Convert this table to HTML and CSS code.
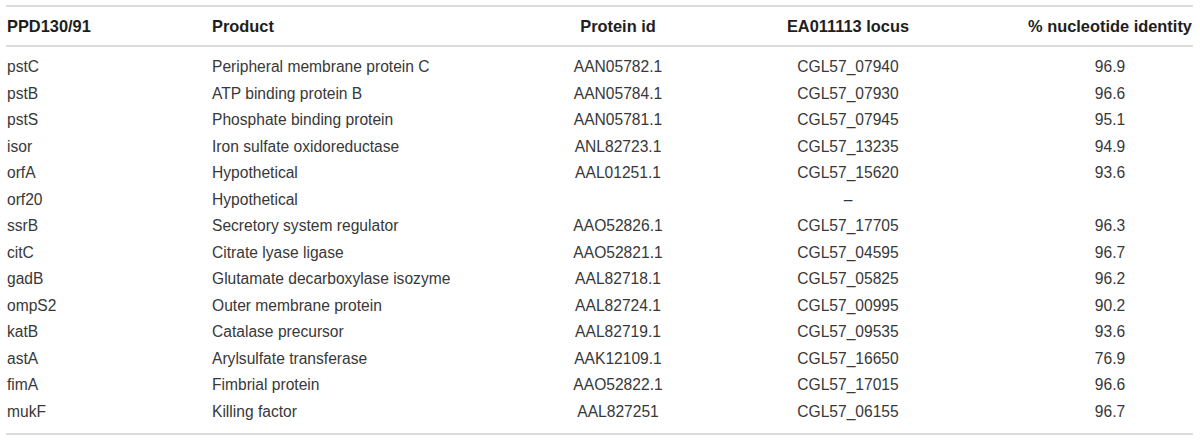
FILE: index.html
```html
<!DOCTYPE html>
<html>
<head>
<meta charset="utf-8">
<link rel="stylesheet" href="styles.css">
</head>
<body>
<div class="table">
  <div class="row head">
    <div class="c l">PPD130/91</div>
    <div class="c l">Product</div>
    <div class="c">Protein id</div>
    <div class="c">EA011113 locus</div>
    <div class="c">% nucleotide identity</div>
  </div>
  <div class="body">
    <div class="row"><div class="c l">pstC</div><div class="c l">Peripheral membrane protein C</div><div class="c">AAN05782.1</div><div class="c">CGL57_07940</div><div class="c">96.9</div></div>
    <div class="row"><div class="c l">pstB</div><div class="c l">ATP binding protein B</div><div class="c">AAN05784.1</div><div class="c">CGL57_07930</div><div class="c">96.6</div></div>
    <div class="row"><div class="c l">pstS</div><div class="c l">Phosphate binding protein</div><div class="c">AAN05781.1</div><div class="c">CGL57_07945</div><div class="c">95.1</div></div>
    <div class="row"><div class="c l">isor</div><div class="c l">Iron sulfate oxidoreductase</div><div class="c">ANL82723.1</div><div class="c">CGL57_13235</div><div class="c">94.9</div></div>
    <div class="row"><div class="c l">orfA</div><div class="c l">Hypothetical</div><div class="c">AAL01251.1</div><div class="c">CGL57_15620</div><div class="c">93.6</div></div>
    <div class="row"><div class="c l">orf20</div><div class="c l">Hypothetical</div><div class="c"></div><div class="c">–</div><div class="c"></div></div>
    <div class="row"><div class="c l">ssrB</div><div class="c l">Secretory system regulator</div><div class="c">AAO52826.1</div><div class="c">CGL57_17705</div><div class="c">96.3</div></div>
    <div class="row"><div class="c l">citC</div><div class="c l">Citrate lyase ligase</div><div class="c">AAO52821.1</div><div class="c">CGL57_04595</div><div class="c">96.7</div></div>
    <div class="row"><div class="c l">gadB</div><div class="c l">Glutamate decarboxylase isozyme</div><div class="c">AAL82718.1</div><div class="c">CGL57_05825</div><div class="c">96.2</div></div>
    <div class="row"><div class="c l">ompS2</div><div class="c l">Outer membrane protein</div><div class="c">AAL82724.1</div><div class="c">CGL57_00995</div><div class="c">90.2</div></div>
    <div class="row"><div class="c l">katB</div><div class="c l">Catalase precursor</div><div class="c">AAL82719.1</div><div class="c">CGL57_09535</div><div class="c">93.6</div></div>
    <div class="row"><div class="c l">astA</div><div class="c l">Arylsulfate transferase</div><div class="c">AAK12109.1</div><div class="c">CGL57_16650</div><div class="c">76.9</div></div>
    <div class="row"><div class="c l">fimA</div><div class="c l">Fimbrial protein</div><div class="c">AAO52822.1</div><div class="c">CGL57_17015</div><div class="c">96.6</div></div>
    <div class="row"><div class="c l">mukF</div><div class="c l">Killing factor</div><div class="c">AAL827251</div><div class="c">CGL57_06155</div><div class="c">96.7</div></div>
  </div>
</div>
</body>
</html>
```
FILE: styles.css
```css
html, body {
  margin: 0;
  padding: 0;
  background: #ffffff;
}
body {
  font-family: "Liberation Sans", Arial, Helvetica, sans-serif;
  font-size: 15.6px;
  color: #383838;
}
.table {
  width: 1187px;
  margin: 5px 0 0 6px;
}
.row {
  display: grid;
  grid-template-columns: 205px 356px 102px 358px 166px;
  height: 26.5px;
  line-height: 26.5px;
}
.c {
  text-align: center;
  white-space: nowrap;
}
.c.l {
  text-align: left;
  padding-left: 1px;
}
.head {
  height: 38px;
  line-height: 38px;
  border-top: 2px solid #dcdcdc;
  border-bottom: 2px solid #dcdcdc;
  font-weight: bold;
  font-size: 16.4px;
  color: #1e1e1e;
}
.body {
  padding: 7px 0 8px;
  border-bottom: 2px solid #dcdcdc;
}
```
